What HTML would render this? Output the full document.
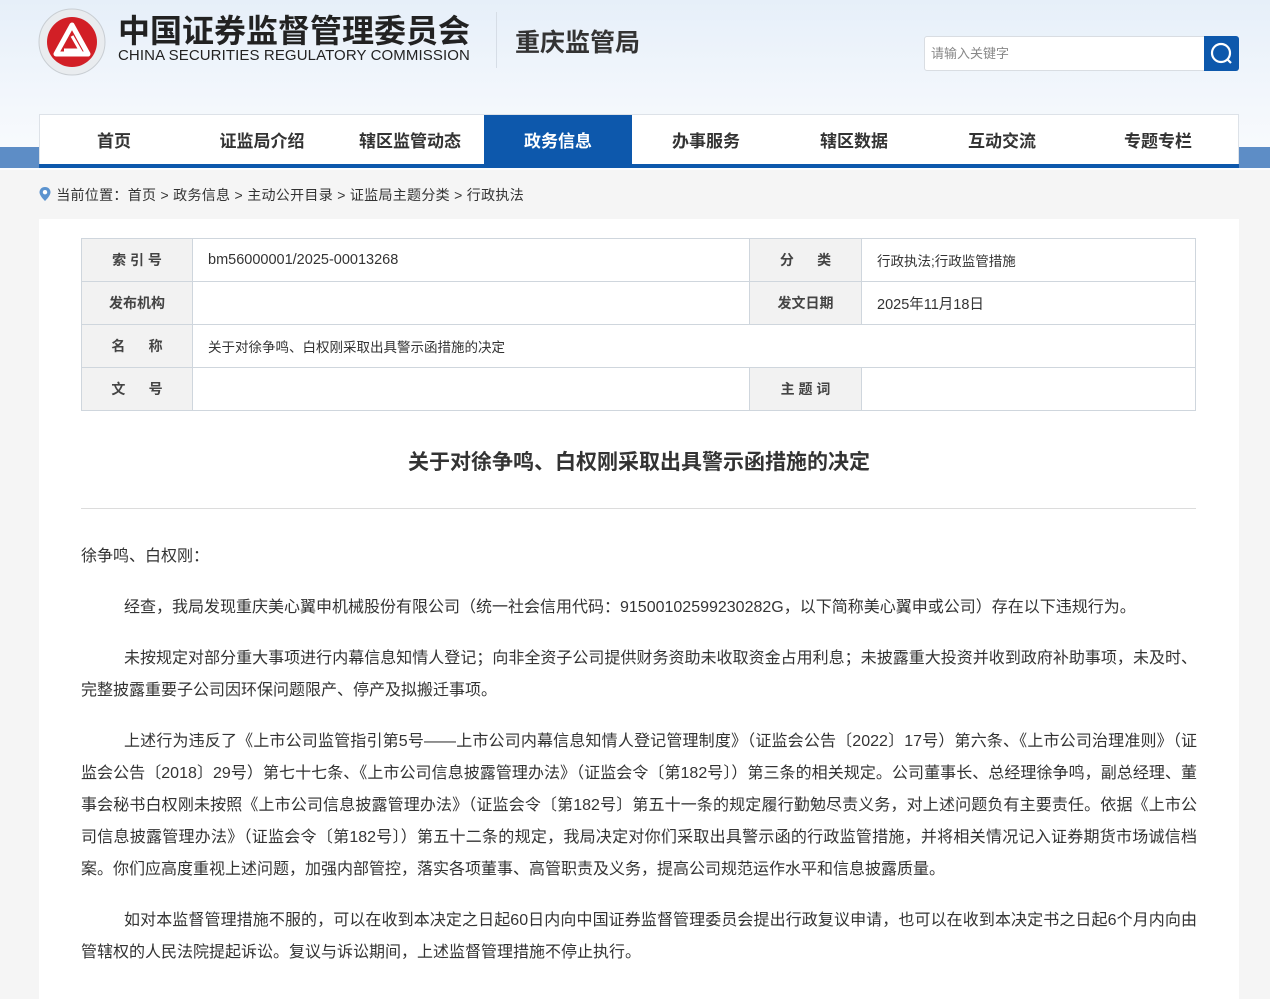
<!DOCTYPE html>
<html><head><meta charset="utf-8">
<style>
*{margin:0;padding:0;box-sizing:border-box}
body{width:1270px;height:991px;overflow:hidden;background:#f5f5f5;font-family:"Liberation Sans","Noto Sans CJK SC",sans-serif;color:#333;position:relative}
.hdr{position:absolute;left:0;top:0;width:1270px;height:170px;background:linear-gradient(180deg,#e6eff9 0%,#f3f7fc 60%,#fafcfe 100%)}
.band{position:absolute;left:0;top:147px;width:1270px;height:21px;background:#5d8dc6}
.logo{position:absolute;left:38px;top:8px}
.cn{position:absolute;left:118px;top:12px;font-size:32px;font-weight:bold;color:#222;line-height:38px}
.en{position:absolute;left:118px;top:48px;font-size:15px;color:#222;line-height:16px;letter-spacing:0.1px}
.vl{position:absolute;left:496px;top:12px;width:1px;height:56px;background:#d6dde6}
.cq{position:absolute;left:515px;top:26px;font-size:25px;font-weight:bold;color:#333;line-height:34px}
.srch{position:absolute;left:924px;top:36px;width:281px;height:35px;border:1px solid #d9dde2;border-radius:3px 0 0 3px;background:#fff;font-size:13px;color:#888;padding:8px 6px;line-height:17px}
.sbtn{position:absolute;left:1204px;top:36px;width:35px;height:35px;background:#0d58ac;border-radius:0 3px 3px 0}
.nav{position:absolute;left:39px;top:114px;width:1200px;height:54px;background:#fff;border:1px solid #dde2e8;border-bottom:none}
.navb{position:absolute;left:39px;top:164px;width:1200px;height:4px;background:#0d58ac}
.nav div{position:absolute;top:0;height:51px;line-height:53px;font-size:17px;font-weight:bold;color:#333;text-align:center}
.nav .on{background:#0d58ac;color:#fff}
.crumb{position:absolute;left:38px;top:185px;font-size:14px;color:#333;line-height:20px;letter-spacing:0.3px}
.main{position:absolute;left:39px;top:219px;width:1200px;height:780px;background:#fff}
table{position:absolute;left:42px;top:19px;width:1115px;border-collapse:collapse;font-size:13.5px}
td{border:1px solid #cfd6dd;height:43px;padding:0 15px;color:#333}
td.l{background:#f2f2f2;font-weight:bold;text-align:center;color:#444;width:111px;padding:0;font-size:14px}
h1{position:absolute;left:0;top:229px;width:1200px;text-align:center;font-size:21px;font-weight:bold;color:#333;line-height:30px}
.hr{position:absolute;left:42px;top:289px;width:1115px;height:1px;background:#dcdcdc}
.txt{position:absolute;left:42px;top:322px;width:1116px;font-size:16px;line-height:32px;color:#333;text-align:justify}
.txt p{margin-bottom:19px;text-indent:43px}
.txt p.n{text-indent:0}
</style></head><body>
<div class="hdr"></div>
<div class="band"></div>
<svg class="logo" width="68" height="68" viewBox="0 0 68 68">
<circle cx="34" cy="34" r="33" fill="#e9ecef" stroke="#c9ced3"/>
<circle cx="34" cy="34" r="25" fill="#d21f26"/>
<path d="M34 17 L50 46 L18 46 Z" fill="none" stroke="#fff" stroke-width="5" stroke-linejoin="round"/>
<path d="M34 28 L42 42 L26 42" fill="none" stroke="#fff" stroke-width="3"/>
</svg>
<div class="cn">中国证券监督管理委员会</div>
<div class="en">CHINA SECURITIES REGULATORY COMMISSION</div>
<div class="vl"></div>
<div class="cq">重庆监管局</div>
<div class="srch">请输入关键字</div>
<div class="sbtn"><svg width="35" height="35" viewBox="0 0 35 35"><circle cx="17" cy="17" r="9" fill="none" stroke="#fff" stroke-width="2.2"/><path d="M23 23 L27 27" stroke="#fff" stroke-width="2.2"/></svg></div>
<div class="nav">
<div style="left:0;width:148px">首页</div>
<div style="left:148px;width:148px">证监局介绍</div>
<div style="left:296px;width:148px">辖区监管动态</div>
<div class="on" style="left:444px;width:148px">政务信息</div>
<div style="left:592px;width:148px">办事服务</div>
<div style="left:740px;width:148px">辖区数据</div>
<div style="left:888px;width:148px">互动交流</div>
<div style="left:1036px;width:164px">专题专栏</div>
</div>
<div class="navb"></div>
<div class="crumb"><svg width="14" height="16" viewBox="0 0 14 16" style="vertical-align:-2px"><path d="M7 1C3.7 1 1.5 3.4 1.5 6.3 1.5 10 7 15 7 15s5.5-5 5.5-8.7C12.5 3.4 10.3 1 7 1z" fill="#5b93cf"/><circle cx="7" cy="6.2" r="2.2" fill="#fff"/></svg> 当前位置：首页 &gt; 政务信息 &gt; 主动公开目录 &gt; 证监局主题分类 &gt; 行政执法</div>
<div class="main">
<table>
<tr><td class="l">索 引 号</td><td style="width:557px;font-size:14.5px">bm56000001/2025-00013268</td><td class="l" style="width:112px">分&nbsp;&nbsp;&nbsp;&nbsp;&nbsp;&nbsp;类</td><td>行政执法;行政监管措施</td></tr>
<tr><td class="l">发布机构</td><td></td><td class="l">发文日期</td><td style="font-size:14.5px">2025年11月18日</td></tr>
<tr><td class="l">名&nbsp;&nbsp;&nbsp;&nbsp;&nbsp;&nbsp;称</td><td colspan="3">关于对徐争鸣、白权刚采取出具警示函措施的决定</td></tr>
<tr><td class="l">文&nbsp;&nbsp;&nbsp;&nbsp;&nbsp;&nbsp;号</td><td></td><td class="l">主 题 词</td><td></td></tr>
</table>
<h1>关于对徐争鸣、白权刚采取出具警示函措施的决定</h1>
<div class="hr"></div>
<div class="txt">
<p class="n">徐争鸣、白权刚：</p>
<p>经查，我局发现重庆美心翼申机械股份有限公司（统一社会信用代码：91500102599230282G，以下简称美心翼申或公司）存在以下违规行为。</p>
<p>未按规定对部分重大事项进行内幕信息知情人登记；向非全资子公司提供财务资助未收取资金占用利息；未披露重大投资并收到政府补助事项，未及时、完整披露重要子公司因环保问题限产、停产及拟搬迁事项。</p>
<p>上述行为违反了《上市公司监管指引第5号——上市公司内幕信息知情人登记管理制度》（证监会公告〔2022〕17号）第六条、《上市公司治理准则》（证监会公告〔2018〕29号）第七十七条、《上市公司信息披露管理办法》（证监会令〔第182号〕）第三条的相关规定。公司董事长、总经理徐争鸣，副总经理、董事会秘书白权刚未按照《上市公司信息披露管理办法》（证监会令〔第182号〕第五十一条的规定履行勤勉尽责义务，对上述问题负有主要责任。依据《上市公司信息披露管理办法》（证监会令〔第182号〕）第五十二条的规定，我局决定对你们采取出具警示函的行政监管措施，并将相关情况记入证券期货市场诚信档案。你们应高度重视上述问题，加强内部管控，落实各项董事、高管职责及义务，提高公司规范运作水平和信息披露质量。</p>
<p>如对本监督管理措施不服的，可以在收到本决定之日起60日内向中国证券监督管理委员会提出行政复议申请，也可以在收到本决定书之日起6个月内向由管辖权的人民法院提起诉讼。复议与诉讼期间，上述监督管理措施不停止执行。</p>
</div>
</div>
</body></html>
